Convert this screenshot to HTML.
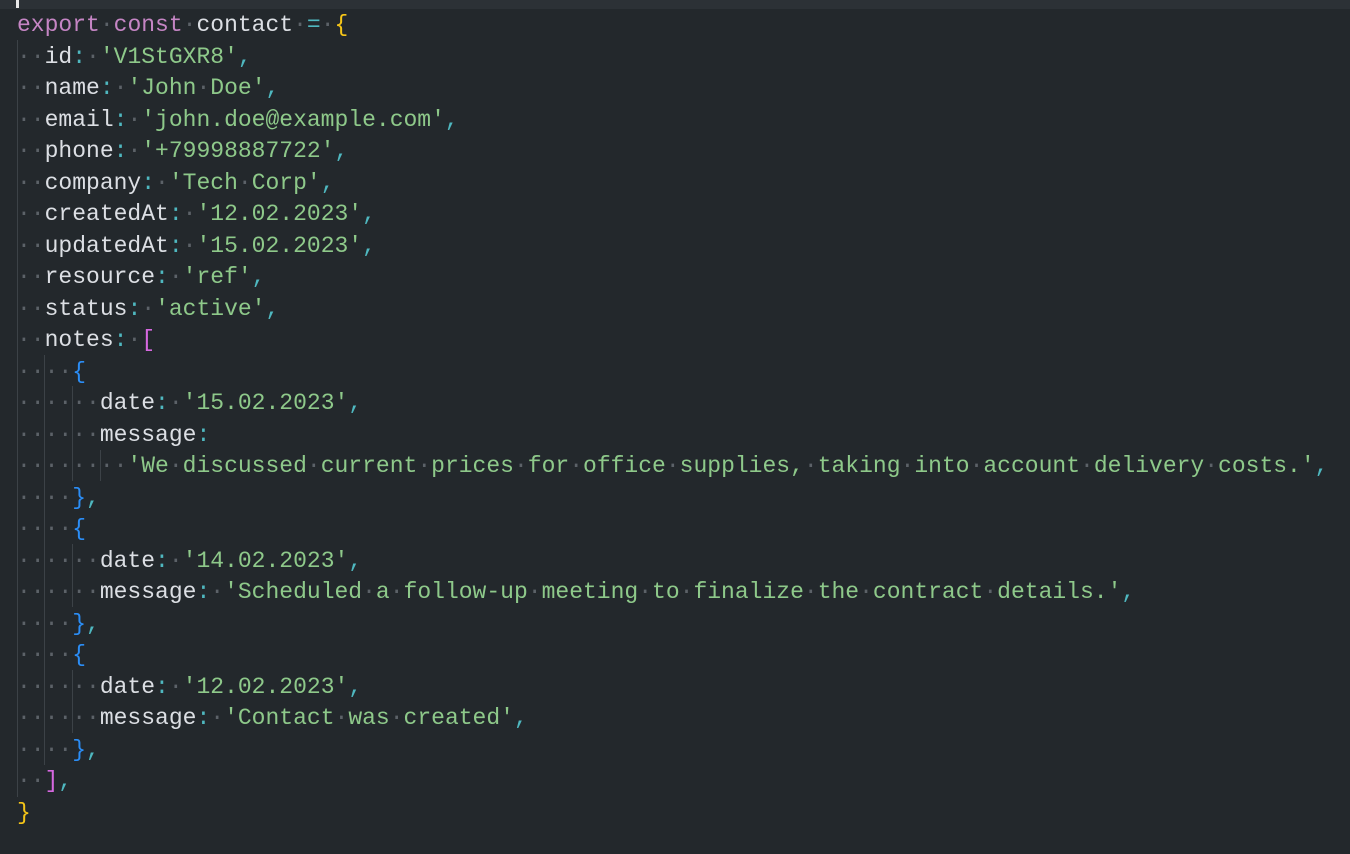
<!DOCTYPE html>
<html><head><meta charset="utf-8"><style>
html,body{margin:0;padding:0;width:1350px;height:854px;background:#23282c;overflow:hidden}
#top{position:absolute;left:0;top:0;width:1350px;height:9px;background:#2c3136}
#cur{position:absolute;left:16px;top:0;width:3px;height:8px;background:#e8e8e8}
.l{position:absolute;left:17px;height:31.5px;line-height:31.5px;font-family:"Liberation Mono",monospace;font-size:23px;white-space:pre;color:#dcdfe4;margin-top:1px}
.d{color:#5c6268}
.k{color:#c585c4}
.p{color:#4fb8c0}
.s{color:#8ec98a}
.y{color:#f5c518}
.b{color:#2b8df5}
.m{color:#d668e0}
.g{position:absolute;width:1px;background:#3c4247}
</style></head><body>
<div id="top"></div><div id="cur"></div>
<div class="g" style="left:17px;top:40px;height:757px"></div>
<div class="g" style="left:44px;top:355px;height:410px"></div>
<div class="g" style="left:72px;top:386px;height:95px"></div>
<div class="g" style="left:72px;top:544px;height:63px"></div>
<div class="g" style="left:72px;top:670px;height:63px"></div>
<div class="g" style="left:100px;top:450px;height:31px"></div>

<div class="l" style="top:9px"><span class="k">export</span><span class="d">·</span><span class="k">const</span><span class="d">·</span>contact<span class="d">·</span><span class="p">=</span><span class="d">·</span><span class="y">{</span></div>
<div class="l" style="top:40.5px"><span class="d">··</span>id<span class="p">:</span><span class="d">·</span><span class="s">'V1StGXR8'</span><span class="p">,</span></div>
<div class="l" style="top:72px"><span class="d">··</span>name<span class="p">:</span><span class="d">·</span><span class="s">'John<span class="d">·</span>Doe'</span><span class="p">,</span></div>
<div class="l" style="top:103.5px"><span class="d">··</span>email<span class="p">:</span><span class="d">·</span><span class="s">'john.doe@example.com'</span><span class="p">,</span></div>
<div class="l" style="top:135px"><span class="d">··</span>phone<span class="p">:</span><span class="d">·</span><span class="s">'+79998887722'</span><span class="p">,</span></div>
<div class="l" style="top:166.5px"><span class="d">··</span>company<span class="p">:</span><span class="d">·</span><span class="s">'Tech<span class="d">·</span>Corp'</span><span class="p">,</span></div>
<div class="l" style="top:198px"><span class="d">··</span>createdAt<span class="p">:</span><span class="d">·</span><span class="s">'12.02.2023'</span><span class="p">,</span></div>
<div class="l" style="top:229.5px"><span class="d">··</span>updatedAt<span class="p">:</span><span class="d">·</span><span class="s">'15.02.2023'</span><span class="p">,</span></div>
<div class="l" style="top:261px"><span class="d">··</span>resource<span class="p">:</span><span class="d">·</span><span class="s">'ref'</span><span class="p">,</span></div>
<div class="l" style="top:292.5px"><span class="d">··</span>status<span class="p">:</span><span class="d">·</span><span class="s">'active'</span><span class="p">,</span></div>
<div class="l" style="top:324px"><span class="d">··</span>notes<span class="p">:</span><span class="d">·</span><span class="m">[</span></div>
<div class="l" style="top:355.5px"><span class="d">····</span><span class="b">{</span></div>
<div class="l" style="top:387px"><span class="d">······</span>date<span class="p">:</span><span class="d">·</span><span class="s">'15.02.2023'</span><span class="p">,</span></div>
<div class="l" style="top:418.5px"><span class="d">······</span>message<span class="p">:</span></div>
<div class="l" style="top:450px"><span class="d">········</span><span class="s">'We<span class="d">·</span>discussed<span class="d">·</span>current<span class="d">·</span>prices<span class="d">·</span>for<span class="d">·</span>office<span class="d">·</span>supplies,<span class="d">·</span>taking<span class="d">·</span>into<span class="d">·</span>account<span class="d">·</span>delivery<span class="d">·</span>costs.'</span><span class="p">,</span></div>
<div class="l" style="top:481.5px"><span class="d">····</span><span class="b">}</span><span class="p">,</span></div>
<div class="l" style="top:513px"><span class="d">····</span><span class="b">{</span></div>
<div class="l" style="top:544.5px"><span class="d">······</span>date<span class="p">:</span><span class="d">·</span><span class="s">'14.02.2023'</span><span class="p">,</span></div>
<div class="l" style="top:576px"><span class="d">······</span>message<span class="p">:</span><span class="d">·</span><span class="s">'Scheduled<span class="d">·</span>a<span class="d">·</span>follow-up<span class="d">·</span>meeting<span class="d">·</span>to<span class="d">·</span>finalize<span class="d">·</span>the<span class="d">·</span>contract<span class="d">·</span>details.'</span><span class="p">,</span></div>
<div class="l" style="top:607.5px"><span class="d">····</span><span class="b">}</span><span class="p">,</span></div>
<div class="l" style="top:639px"><span class="d">····</span><span class="b">{</span></div>
<div class="l" style="top:670.5px"><span class="d">······</span>date<span class="p">:</span><span class="d">·</span><span class="s">'12.02.2023'</span><span class="p">,</span></div>
<div class="l" style="top:702px"><span class="d">······</span>message<span class="p">:</span><span class="d">·</span><span class="s">'Contact<span class="d">·</span>was<span class="d">·</span>created'</span><span class="p">,</span></div>
<div class="l" style="top:733.5px"><span class="d">····</span><span class="b">}</span><span class="p">,</span></div>
<div class="l" style="top:765px"><span class="d">··</span><span class="m">]</span><span class="p">,</span></div>
<div class="l" style="top:796.5px"><span class="y">}</span></div>
</body></html>
